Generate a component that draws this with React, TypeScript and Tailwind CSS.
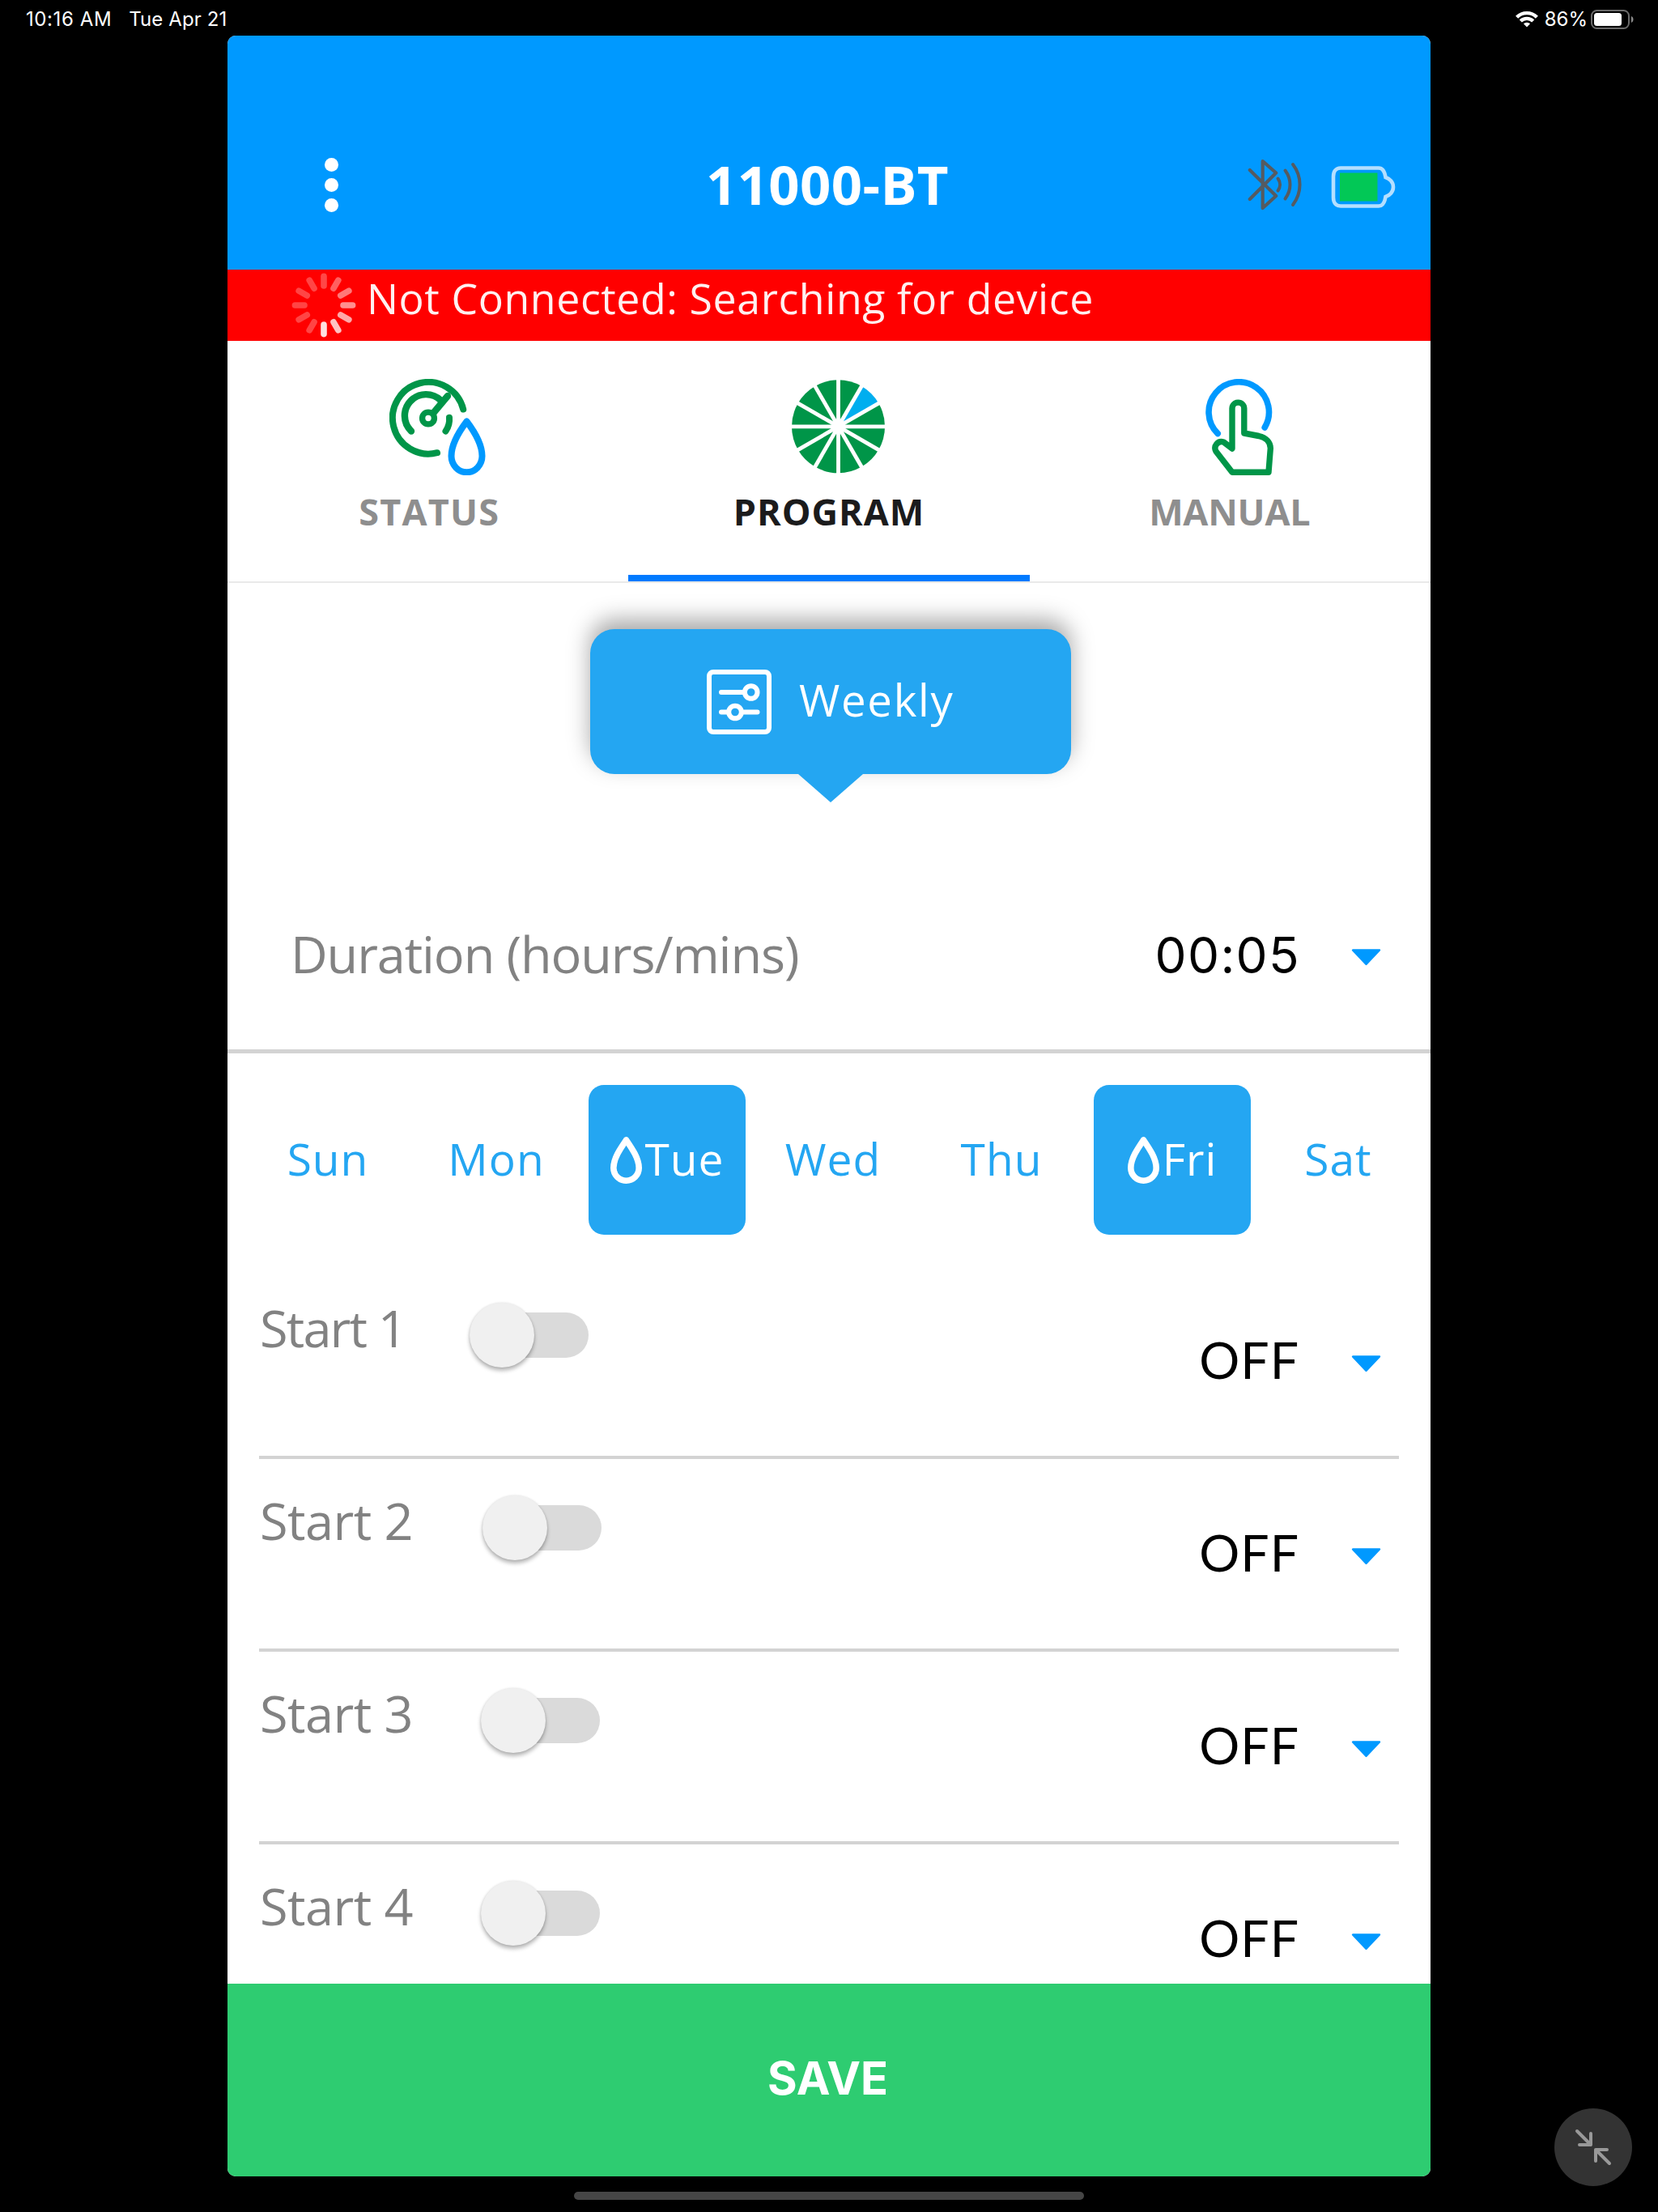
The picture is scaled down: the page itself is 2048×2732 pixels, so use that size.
import type { ReactNode } from "react";

const BLUE = "#0099ff";
const GREEN = "#009548";

function WifiIcon() {
  return (
    <svg width="28" height="21" viewBox="0 0 28 21" fill="none" stroke="#fff" strokeWidth="4.400">
      <path d="M1.600 8.200a17.600 17.600 0 0 1 24.800 0" />
      <path d="M6.300 13a11 11 0 0 1 15.400 0" />
      <path d="M14 20.600l-4.100-4.300a5.900 5.900 0 0 1 8.200 0z" fill="#fff" stroke="none" />
    </svg>
  );
}

function StatusBattery() {
  return (
    <svg width="53" height="24" viewBox="0 0 53 24" fill="none">
      <rect x="1" y="1" width="46" height="22" rx="6.500" stroke="#6a6a6a" strokeWidth="2" />
      <rect x="4" y="4" width="34" height="16" rx="3.500" fill="#fff" />
      <path d="M50 8c1.600.8 2.500 2 2.500 4s-.9 3.200-2.500 4z" fill="#8a8a8a" />
    </svg>
  );
}

function StatusBar() {
  return (
    <div className="flex h-[44px] shrink-0 items-center justify-between pt-[3px] pr-[30px] pl-8 font-['Inter',sans-serif] text-[24px] leading-none text-white">
      <div className="flex gap-[21px] whitespace-nowrap">
        <span className="tracking-[0.6px]">10:16 AM</span>
        <span className="tracking-[0.1px]">Tue Apr 21</span>
      </div>
      <div className="flex items-center">
        <WifiIcon />
        <span className="ml-2">86%</span>
        <span className="ml-[4px]">
          <StatusBattery />
        </span>
      </div>
    </div>
  );
}

function BluetoothIcon() {
  return (
    <svg width="68" height="64" viewBox="0 0 68 64" fill="none" stroke="#555b61" strokeWidth="4" strokeLinejoin="round" strokeLinecap="round">
      <path d="M2.800 14l32.400 32-16.500 15V3l16.500 14.500L2.800 50" strokeWidth="4.200" />
      <path d="M37.500 24.500c3.400 4.600 3.400 10.400 0 15" />
      <path d="M46.500 14.500c8 10.800 8 24.200 0 35" />
      <path d="M56 7c11.400 15 11.400 35 0 50" />
    </svg>
  );
}

function DeviceBattery() {
  return (
    <svg width="80" height="52" viewBox="0 0 80 52" fill="none">
      <path
        d="M12 2.500h47c5 0 7.500 5 8.500 11.500 5 1.500 9.500 6 9.500 12s-4.500 10.500-9.500 12C66.500 44.500 64 49.500 59 49.500H12C6 49.500 3 45 3 39V13c0-6 3-10.500 9-10.500z"
        stroke="#b5dfff"
        strokeWidth="4.600"
      />
      <rect x="11" y="8.500" width="46.500" height="35" fill="#02c856" />
    </svg>
  );
}

function Header() {
  return (
    <header className="grid h-[289px] shrink-0 grid-cols-[1fr_auto_1fr] items-center bg-[#0099ff] pt-[79px] pr-[43px] pl-[120px]">
      <div className="flex flex-col gap-2">
        <span className="size-[17px] rounded-full bg-white" />
        <span className="size-[17px] rounded-full bg-white" />
        <span className="size-[17px] rounded-full bg-white" />
      </div>
      <h1 className="mr-[81px] mb-[2px] text-[67px] leading-none font-bold tracking-[0.4px] whitespace-nowrap text-white">11000-BT</h1>
      <div className="flex items-center justify-end gap-[35px]">
        <BluetoothIcon />
        <span className="mt-[5px]">
          <DeviceBattery />
        </span>
      </div>
    </header>
  );
}

const SPOKES = [0.28, 0.38, 0.47, 0.56, 0.66, 0.76, 0.88, 0.27, 0.27, 0.27, 0.27, 0.27];

function Spinner() {
  return (
    <svg width="80" height="80" viewBox="-40 -40 80 80" stroke="#fff" strokeWidth="7.600" strokeLinecap="round">
      {SPOKES.map((o, i) => (
        <line key={i} x1="0" y1="-24" x2="0" y2="-35.600" opacity={o} transform={`rotate(${i * 30})`} />
      ))}
    </svg>
  );
}

function ConnectionBanner() {
  return (
    <div className="flex h-[88px] shrink-0 items-start bg-[#ff0000] pl-[79px]">
      <span className="mt-1">
        <Spinner />
      </span>
      <p className="mt-px ml-[13px] text-[51.800px] leading-[68px] tracking-[0.600px] whitespace-nowrap text-[#fff0f0]">Not Connected: Searching for device</p>
    </div>
  );
}

function GaugeIcon() {
  return (
    <svg width="119" height="119" viewBox="0 0 119 119" fill="none" strokeWidth="8" strokeLinecap="round">
      <g stroke={GREEN}>
        <path d="M91.200 37.500A44.300 44.300 0 1 0 59 91.200" />
        <path d="M27 64.500A25.500 25.500 0 0 1 63.500 26.500" strokeWidth="8.400" />
        <path d="M74 47.700A25 25 0 0 1 69.500 64.500" />
        <path d="M54 42.500L72 21" strokeWidth="8.400" />
        <circle cx="48" cy="48.500" r="7.400" strokeWidth="7.400" />
      </g>
      <path d="M95.500 52.500C86 65 76.500 81 76.500 95.300a19 20 0 0 0 38 0C114.500 81 105 65 95.500 52.500z" stroke={BLUE} strokeLinejoin="round" />
    </svg>
  );
}

function WheelIcon() {
  return (
    <svg width="119" height="119" viewBox="-59.500 -58.800 119 119">
      {Array.from({ length: 12 }, (_, i) => (
        <path key={i} d="M0 0V-57.500A57.500 57.500 0 0 1 28.750 -49.800z" fill={i === 1 ? "#00aeef" : GREEN} transform={`rotate(${i * 30})`} />
      ))}
      {Array.from({ length: 6 }, (_, i) => (
        <line key={i} x1="0" y1="-60" x2="0" y2="60" stroke="#fff" strokeWidth="4.800" transform={`rotate(${i * 30})`} />
      ))}
      <circle r="9" fill="#fff" />
    </svg>
  );
}

function TapIcon() {
  return (
    <svg width="86" height="119" viewBox="0 0 86 119" fill="none" strokeLinecap="round" strokeLinejoin="round">
      <path d="M16.200 67.500A37.200 37.200 0 1 1 74.200 60" stroke={BLUE} strokeWidth="7.600" />
      <path
        d="M34 86V36.500a7.400 7.400 0 0 1 14.800 0V67L67 70.500c9 2 14.500 8 14.300 15.500L79 115.200H34L14 89.500c-3.500-6.500 2-13.500 9.500-11.500z"
        stroke={GREEN}
        strokeWidth="7.400"
      />
    </svg>
  );
}

function Tab({ icon, label, active = false }: { icon: ReactNode; label: ReactNode; active?: boolean }) {
  return (
    <div
      className={
        active
          ? "flex flex-col items-center border-b-8 border-[#007aff] pt-[47px] text-[#1b1b1c]"
          : "flex flex-col items-center border-b-8 border-transparent pt-[47px] text-[#8e8e8e]"
      }
    >
      <span className="ml-6 block h-[119px]">{icon}</span>
      <span className="mt-[15px] text-[45px] leading-[60px] font-bold">{label}</span>
    </div>
  );
}

function Tabs() {
  return (
    <nav className="grid h-[297px] shrink-0 grid-cols-3 bg-white">
      <Tab icon={<GaugeIcon />} label={<span className="ml-[3px] tracking-[1.200px]">STATUS</span>} />
      <Tab icon={<WheelIcon />} label={<span className="tracking-[1px]">PROGRAM</span>} active />
      <Tab icon={<TapIcon />} label={<span className="mr-px tracking-[-0.200px]">MANUAL</span>} />
    </nav>
  );
}

function SlidersIcon() {
  return (
    <svg width="80" height="80" viewBox="0 0 80 80" fill="none" stroke="#fff" strokeWidth="6" strokeLinecap="round">
      <rect x="3" y="3" width="74" height="74" rx="5" />
      <path d="M18 28h28M18 52.500h8.500M43 52.500h19.500" />
      <circle cx="54.700" cy="28" r="7.800" />
      <circle cx="35" cy="52.500" r="7.800" />
    </svg>
  );
}

function ModeButton() {
  return (
    <div className="mt-[57px] ml-[448px] flex w-[594px] flex-col items-center">
      <button className="flex h-[179px] w-full items-center rounded-[30px] bg-[#24a6f2] pl-[144px] shadow-[0_-12px_28px_rgba(0,0,0,0.34)]">
        <SlidersIcon />
        <span className="mb-[4px] ml-[34px] text-[54.500px] leading-none tracking-[1.700px] text-white">Weekly</span>
      </button>
      <svg width="80" height="35" viewBox="0 0 80 35">
        <path d="M0 0h80L40 35z" fill="#24a6f2" />
      </svg>
    </div>
  );
}

function Caret() {
  return (
    <svg width="37" height="21" viewBox="0 0 37 21">
      <path d="M2 1.500h33L18.500 19z" fill={BLUE} stroke={BLUE} strokeWidth="2.400" strokeLinejoin="round" />
    </svg>
  );
}

function DurationRow() {
  return (
    <div className="mt-[67px] flex h-[243px] items-center border-b-[5px] border-[#d3d3d3] pr-[61px] pl-[78px]">
      <span className="mt-px text-[63px] leading-none tracking-[-1.100px] whitespace-nowrap text-[#828282]">Duration (hours/mins)</span>
      <span className="mt-[5px] ml-auto font-['Inter',sans-serif] text-[62px] leading-none tracking-[1.300px] text-black">00:05</span>
      <span className="mt-[11px] ml-[63px]">
        <Caret />
      </span>
    </div>
  );
}

function DropIcon() {
  return (
    <svg width="39" height="59" viewBox="0 0 39 59" fill="none">
      <path d="M19.500 5C12 16 3.800 28 3.800 39.500a15.700 15.700 0 0 0 31.400 0C35.200 28 27 16 19.500 5z" stroke="#fff" strokeWidth="7.600" strokeLinejoin="round" />
    </svg>
  );
}

const DAYS = [
  { name: "Sun", on: false },
  { name: "Mon", on: false },
  { name: "Tue", on: true },
  { name: "Wed", on: false },
  { name: "Thu", on: false },
  { name: "Fri", on: true },
  { name: "Sat", on: false },
];

function DayPicker() {
  return (
    <div className="mt-[39px] ml-[30px] flex gap-[14px] text-[55px] leading-none tracking-[1px]">
      {DAYS.map((d) =>
        d.on ? (
          <button key={d.name} className="flex h-[185px] w-[194px] shrink-0 items-center justify-center gap-[4px] rounded-[19px] bg-[#24a6f2] text-white">
            <DropIcon />
            <span className="mb-[4px]">{d.name}</span>
          </button>
        ) : (
          <button key={d.name} className="flex h-[185px] w-[194px] shrink-0 items-center justify-center pr-[6px] text-[#24a6f2]">
            <span className="mb-[4px]">{d.name}</span>
          </button>
        ),
      )}
    </div>
  );
}

function Toggle() {
  return (
    <span className="mt-[45px] flex h-20 w-[147px] shrink-0 items-center">
      <span className="z-10 size-20 shrink-0 rounded-full bg-[#f0f0f0] shadow-[0_4px_5px_rgba(0,0,0,0.28),0_0_3px_rgba(0,0,0,0.12)]" />
      <span className="-ml-10 h-14 flex-1 rounded-r-full bg-[#dadada]" />
    </span>
  );
}

const STARTS = [
  { name: "Start 1", label: "w-[259px] tracking-[-1.800px]" },
  { name: "Start 2", label: "w-[275px] tracking-[-0.500px]" },
  { name: "Start 3", label: "w-[273px] tracking-[-0.500px]" },
  { name: "Start 4", label: "w-[273px] tracking-[-0.500px]" },
];

function StartRows() {
  return (
    <div className="mt-[39px] px-[39px]">
      {STARTS.map((s) => (
        <div key={s.name} className="flex h-[238px] items-start border-b-4 border-[#d3d3d3] pr-[22px]">
          <span className={`${s.label} mt-[36px] ml-px shrink-0 text-[63px] leading-[80px] whitespace-nowrap text-[#828282]`}>{s.name}</span>
          <Toggle />
          <div className="mt-[75px] ml-auto flex items-center">
            <span className="font-['Lato',sans-serif] text-[62.500px] leading-[80px] tracking-[1px] text-black">OFF</span>
            <span className="mt-[10px] ml-[64px]">
              <Caret />
            </span>
          </div>
        </div>
      ))}
    </div>
  );
}

function ShrinkButton() {
  return (
    <button className="absolute right-[32px] bottom-[32px] flex size-24 items-center justify-center rounded-full bg-[#333333]">
      <svg width="46" height="46" viewBox="0 0 46 46" fill="none" stroke="#999999" strokeWidth="4" strokeLinecap="round" strokeLinejoin="round">
        <path d="M3 3l17 17M20 6v14H6" />
        <path d="M43 43L26 26M26 40V26h14" />
      </svg>
    </button>
  );
}

export default function App() {
  return (
    <div className="relative flex h-[2732px] w-[2048px] flex-col overflow-hidden bg-black font-['Open_Sans',sans-serif]">
      <StatusBar />
      <main className="ml-[281px] flex h-[2644px] w-[1486px] shrink-0 flex-col overflow-hidden rounded-[10px] bg-white">
        <Header />
        <ConnectionBanner />
        <Tabs />
        <section className="min-h-0 flex-1 overflow-hidden border-t-2 border-[#e9e9e9]">
          <ModeButton />
          <DurationRow />
          <DayPicker />
          <StartRows />
        </section>
        <button className="h-[238px] shrink-0 bg-[#2ecc71] pr-[3px] pb-[4px] font-['Inter',sans-serif] text-[56px] leading-none font-bold text-white">SAVE</button>
      </main>
      <div className="mt-[19px] ml-[709px] h-[10px] w-[630px] rounded-full bg-[#464646]" />
      <ShrinkButton />
    </div>
  );
}
